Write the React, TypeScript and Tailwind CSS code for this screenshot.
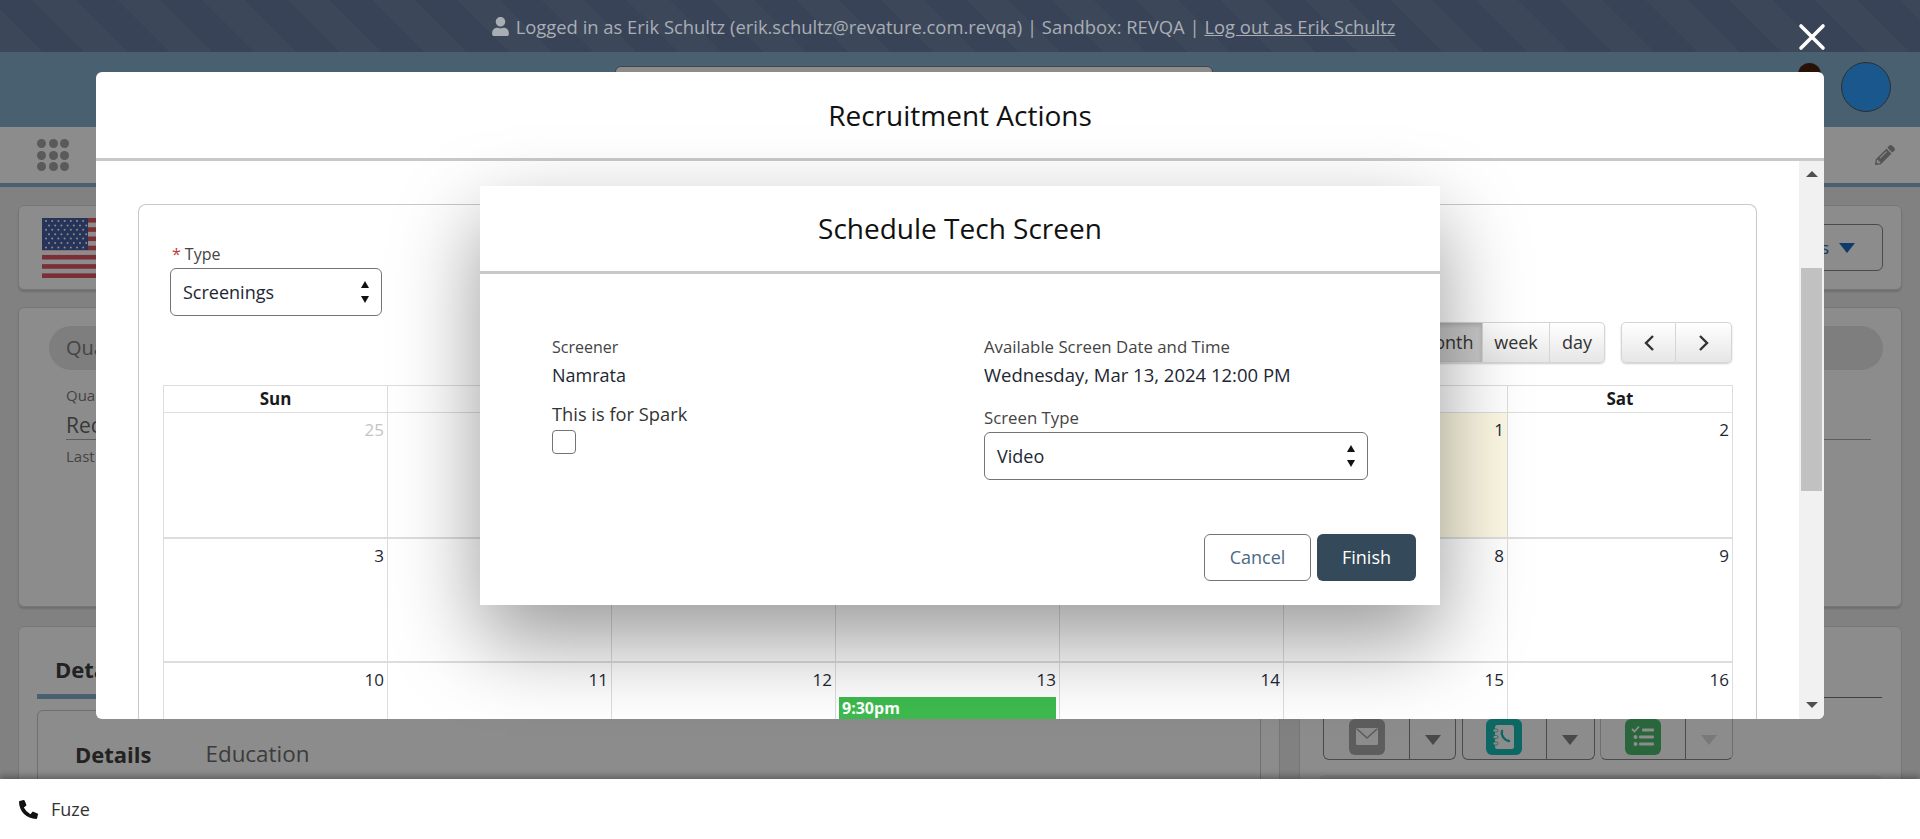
import React from "react";
import { FaPencilAlt, FaPhoneAlt, FaUser } from "react-icons/fa";

const font = "font-['Open_Sans','Noto_Sans',sans-serif]";

function Arrows() {
  return (
    <svg width="10" height="24" viewBox="0 0 10 24" className="shrink-0">
      <path d="M5 1l4 7H1z" fill="#111" />
      <path d="M5 23l4-7H1z" fill="#111" />
    </svg>
  );
}

function Flag() {
  const stripes = [0, 1, 2, 3, 4, 5, 6];
  const stars: React.ReactNode[] = [];
  for (let r = 0; r < 7; r++) {
    for (let c = 0; c < 7; c++) {
      stars.push(<circle key={`${r}-${c}`} cx={4 + c * 6.2 + (r % 2 ? 3 : 0)} cy={3 + r * 4.4} r="1" fill="#ffffff" />);
    }
  }
  return (
    <svg width="84" height="60" viewBox="0 0 84 60" className="shrink-0">
      <rect width="84" height="60" fill="#ffffff" />
      {stripes.map((i) => (
        <rect key={i} y={i * 9.23} width="84" height="4.6" fill="#dd5762" />
      ))}
      <rect width="46" height="32" fill="#475fa3" />
      {stars}
    </svg>
  );
}

function ActionIcon({ bg, kind }: { bg: string; kind: "mail" | "book" | "list" }) {
  return (
    <svg width="36" height="36" viewBox="0 0 36 36" className="shrink-0">
      <rect width="36" height="36" rx="6" fill={bg} />
      {kind === "mail" && (
        <g>
          <rect x="7" y="9" width="22" height="17" rx="1.5" fill="#ffffff" />
          <path d="M8 10l10 9 10-9" fill="none" stroke={bg} strokeWidth="1.6" />
        </g>
      )}
      {kind === "book" && (
        <g>
          <rect x="9" y="6" width="19" height="24" rx="2.5" fill="#ffffff" />
          <rect x="7" y="10" width="5" height="3" rx="1.5" fill="#ffffff" stroke={bg} strokeWidth="0.8" />
          <rect x="7" y="16.5" width="5" height="3" rx="1.5" fill="#ffffff" stroke={bg} strokeWidth="0.8" />
          <rect x="7" y="23" width="5" height="3" rx="1.5" fill="#ffffff" stroke={bg} strokeWidth="0.8" />
          <path d="M16 12c-1 3 1 9 7 10" fill="none" stroke={bg} strokeWidth="2.4" strokeLinecap="round" />
        </g>
      )}
      {kind === "list" && (
        <g fill="#ffffff">
          <path d="M7 10l2.5 2.5L14 7.5" fill="none" stroke="#ffffff" strokeWidth="1.8" />
          <rect x="17" y="9.5" width="12" height="3" rx="1" />
          <circle cx="10.5" cy="18" r="2" />
          <rect x="14" y="16.5" width="15" height="3" rx="1" />
          <circle cx="10.5" cy="25" r="2" />
          <rect x="14" y="23.5" width="15" height="3" rx="1" />
        </g>
      )}
    </svg>
  );
}

function ActionGroup({ bg, kind, dim, split }: { bg: string; kind: "mail" | "book" | "list"; dim?: boolean; split: string }) {
  return (
    <div className={`flex h-[46px] w-[133px] rounded-b-[6px] border border-t-0 ${dim ? "border-[#c8c8c8] border-b-[#888888]" : "border-[#888888]"}`}>
      <div className={`flex items-end justify-center pb-[4px] ${split} border-r border-r-[#888888]`}>
        <ActionIcon bg={bg} kind={kind} />
      </div>
      <div className="flex flex-1 items-center justify-center pt-[6px]">
        <svg width="16" height="10" viewBox="0 0 16 10">
          <path d="M0 0h16L8 10z" fill={dim ? "#dcdcdc" : "#868686"} />
        </svg>
      </div>
    </div>
  );
}

/* Cells behind the Schedule Tech Screen dialog stay empty: nothing of them shows. */
const rows = [
  ["25", "", "", "", "", "1", "2"],
  ["3", "", "", "", "", "8", "9"],
  ["10", "11", "12", "13", "14", "15", "16"],
];
const days = ["Sun", "", "", "", "", "", "Sat"];

function Calendar() {
  return (
    <div className="w-[1570px] border-l border-r border-t border-[#dddddd]">
      <div className="grid h-[27px] grid-cols-7 border-b border-[#dddddd]">
        {days.map((d, i) => (
          <div key={i} className={`text-center text-[17px] leading-[26px] font-bold text-[#1a1a1a] ${i < 6 ? "border-r border-[#dddddd]" : ""}`}>
            {d}
          </div>
        ))}
      </div>
      {rows.map((row, r) => (
        <div key={r} className={`grid grid-cols-7 ${r === 0 ? "h-[126px]" : "h-[124px]"} ${r < 2 ? "border-b-2 border-[#dddddd]" : ""}`}>
          {row.map((n, i) => (
            <div key={i} className={`pr-[3px] pt-[4px] text-right text-[17px] leading-[26px] ${i < 6 ? "border-r border-[#dddddd]" : ""} ${r === 0 && i === 5 ? "bg-[#fcf8e3]" : ""} ${n === "25" ? "text-[#c4c4c4]" : "text-[#1d2733]"}`}>
              {n}
              {n === "13" && (
                <div className="mt-[4px] ml-[3px] h-[28px] bg-[#3dbb4e] pl-[3px] text-left text-[16px] leading-[22px] font-bold text-white">9:30pm</div>
              )}
            </div>
          ))}
        </div>
      ))}
    </div>
  );
}

function Page() {
  return (
    <div className="relative h-[727px] overflow-hidden bg-[#ececec]">
      <div className="flex h-[75px] justify-center bg-[#85b0cc]">
        <div className="mr-[92px] mt-[14px] h-[20px] w-[598px] rounded-t-[6px] border border-[#7c7c7c] bg-white" />
        <div className="absolute left-[1798px] top-[11px] h-[24px] w-[23px] rounded-full bg-[#4a2110]" />
        <div className="absolute left-[1841px] top-[10px] h-[50px] w-[50px] rounded-full border border-[#555] bg-[#2f9fff]" />
      </div>
      <div className="flex h-[56px] items-center justify-between bg-white pl-[37px] pr-[25px]">
        <div className="grid grid-cols-3 gap-[2.5px]">
          {Array.from({ length: 9 }).map((_, i) => (
            <div key={i} className="h-[9px] w-[9px] rounded-full bg-[#a4a4a4]" />
          ))}
        </div>
        <FaPencilAlt className="text-[20px] text-[#9a9a9a]" />
      </div>
      <div className="h-[4px] bg-[#85b0cc]" />
      <div className="flex flex-col gap-[17px] px-[18px] pt-[18px]">
        <div className="flex h-[85px] items-center justify-between rounded-[6px] border border-[#d8d8d8] bg-white pl-[23px] pr-[18px] shadow-[0_2px_2px_rgba(0,0,0,0.15)]">
          <Flag />
          <div className="flex h-[47px] w-[130px] items-center justify-end gap-[10px] rounded-[6px] border border-[#888] pr-[27px] text-[17px] text-[#2a6a9e]">
            Actions
            <svg width="16" height="10" viewBox="0 0 16 10">
              <path d="M0 0h16L8 10z" fill="#1a6cc0" />
            </svg>
          </div>
        </div>
        <div className="h-[300px] rounded-[6px] border border-[#d8d8d8] bg-white pl-[30px] pr-[18px] pt-[18px] shadow-[0_2px_2px_rgba(0,0,0,0.15)]">
          <div className="flex h-[44px] items-center rounded-full bg-[#e5e5e5] px-[17px] text-[20px] text-[#7c7c7c]">Qualification</div>
          <div className="pl-[17px] pr-[12px]">
            <div className="mt-[14px] text-[15px] text-[#7c7c7c]">Qualification Status</div>
            <div className="mt-[5px] border-b border-[#aaa] pb-[1px] text-[21px] leading-[26px] text-[#666]">Recruit</div>
            <div className="mt-[5px] text-[15px] text-[#7c7c7c]">Last Modified</div>
          </div>
        </div>
        <div className="mt-[2px] flex gap-[19px]">
          <div className="h-[200px] w-[1262px] rounded-t-[6px] border border-[#d8d8d8] bg-white px-[18px] pt-[24px]">
            <div className="w-[110px] border-b-[5px] border-[#85b0cc] pb-[7px] pl-[18px] text-[22px] leading-[36px] font-bold text-[#3e3e3e]">Details</div>
            <div className="mt-[11px] h-[100px] rounded-t-[6px] border border-[#ccc] pl-[37px] pt-[25px]">
              <div className="flex gap-[54px] text-[22px] leading-[36px] text-[#6d6d6d]">
                <span className="font-bold text-[#3e3e3e]">Details</span>
                <span className="text-[22.4px]">Education</span>
              </div>
            </div>
          </div>
          <div className="h-[200px] flex-1 rounded-t-[6px] border border-[#d8d8d8] bg-white px-[19px] pt-[70px]">
            <div className="border-b border-[#777]" />
            <div className="mt-[16px] flex gap-[5.5px] pl-[4px]">
              <ActionGroup bg="#a9a9a9" kind="mail" split="w-[86px]" />
              <ActionGroup bg="#19bdb6" kind="book" split="w-[84px]" />
              <ActionGroup bg="#4cbb6c" kind="list" split="w-[85px]" dim />
            </div>
            <div className="mt-[15px] h-[20px] rounded-t-[6px] bg-[#eee]" />
          </div>
        </div>
      </div>
    </div>
  );
}

function Select({ value, className }: { value: string; className: string }) {
  return (
    <div className={`flex h-[48px] items-center justify-between rounded-[6px] border border-[#747474] bg-white pl-[12px] pr-[11px] text-[18px] text-[#1d2733] ${className}`}>
      <span className="pt-[1px]">{value}</span>
      <Arrows />
    </div>
  );
}

function ToolButton({ children, active, className }: { children: React.ReactNode; active?: boolean; className: string }) {
  return (
    <div className={`flex items-center justify-center border-[#d5d5d5] text-[18px] text-[#333] ${active ? "bg-[#c9c9c9] shadow-[inset_0_2px_4px_rgba(0,0,0,0.15)]" : "bg-gradient-to-b from-white to-[#e6e6e6]"} ${className}`}>
      {children}
    </div>
  );
}

function RecruitmentModal() {
  return (
    <div className="absolute left-[96px] top-[72px] flex h-[647px] w-[1728px] flex-col overflow-hidden rounded-[6px] bg-white">
      <div className="flex h-[89px] shrink-0 items-center justify-center border-b-[3px] border-[#c9c9c9] pb-[1px] text-[28px] text-[#111]">Recruitment Actions</div>
      <div className="flex min-h-0 flex-1">
        <div className="min-w-0 flex-1 overflow-hidden pl-[42px] pr-[42px] pt-[43px]">
          <div className="h-[800px] rounded-t-[8px] border border-b-0 border-[#c9c9c9] pl-[24px] pt-[38px]">
            <div className="pl-[9px] text-[16px] leading-[22px] text-[#444]">
              <span className="mr-[4px] text-[#c23934]">*</span>Type
            </div>
            <Select value="Screenings" className="ml-[7px] mt-[3px] w-[212px]" />
            <div className="mt-[6px] flex h-[41px] w-[1569px] justify-end gap-[16px]">
              <div className="flex rounded-[5px] shadow-[0_1px_2px_rgba(0,0,0,0.2)]">
                <ToolButton active className="w-[75px] rounded-l-[5px] border">month</ToolButton>
                <ToolButton className="w-[67px] border-y border-r">week</ToolButton>
                <ToolButton className="w-[55px] rounded-r-[5px] border-y border-r">day</ToolButton>
              </div>
              <div className="flex rounded-[5px] shadow-[0_1px_2px_rgba(0,0,0,0.2)]">
                <ToolButton className="w-[55px] rounded-l-[5px] border">
                  <svg width="12" height="18" viewBox="0 0 12 18"><path d="M10 2L3 9l7 7" fill="none" stroke="#333" strokeWidth="2.4" /></svg>
                </ToolButton>
                <ToolButton className="w-[56px] rounded-r-[5px] border-y border-r">
                  <svg width="12" height="18" viewBox="0 0 12 18"><path d="M2 2l7 7-7 7" fill="none" stroke="#333" strokeWidth="2.4" /></svg>
                </ToolButton>
              </div>
            </div>
            <div className="mt-[22px]">
              <Calendar />
            </div>
          </div>
        </div>
        <div className="flex w-[25px] shrink-0 flex-col items-center bg-[#f1f1f1] pt-[10px]">
          <svg width="12" height="6" viewBox="0 0 12 6"><path d="M6 0l6 6H0z" fill="#505050" /></svg>
          <div className="mt-[91px] h-[223px] w-[21px] bg-[#c1c1c1]" />
          <div className="flex-1" />
          <svg className="mb-[11px]" width="12" height="6" viewBox="0 0 12 6"><path d="M6 6l6-6H0z" fill="#505050" /></svg>
        </div>
      </div>
    </div>
  );
}

function ScheduleModal() {
  return (
    <div className="absolute left-[480px] top-[186px] flex h-[419px] w-[960px] flex-col bg-white shadow-[0_35px_80px_rgba(0,0,0,0.4)]">
      <div className="flex h-[88px] shrink-0 items-center justify-center border-b-[3px] border-[#c9c9c9] pb-[1px] text-[28px] text-[#111]">Schedule Tech Screen</div>
      <div className="grid grid-cols-[432px_1fr] pl-[72px] pr-[72px] pt-[61px]">
        <div>
          <div className="text-[16px] leading-[24px] text-[#444]">Screener</div>
          <div className="mt-[3px] text-[18px] leading-[26px] text-[#1d2733]">Namrata</div>
          <div className="mt-[13px] text-[18.3px] leading-[26px] text-[#333]">This is for Spark</div>
          <div className="mt-[3px] h-[24px] w-[24px] rounded-[4px] border border-[#747474]" />
        </div>
        <div>
          <div className="text-[16.8px] leading-[24px] text-[#444]">Available Screen Date and Time</div>
          <div className="mt-[3px] text-[18.5px] leading-[26px] text-[#1d2733]">Wednesday, Mar 13, 2024 12:00 PM</div>
          <div className="mt-[18px] text-[16.8px] leading-[24px] text-[#444]">Screen Type</div>
          <Select value="Video" className="mt-[2px] w-[384px]" />
        </div>
      </div>
      <div className="mt-[54px] flex justify-end gap-[6px] pr-[24px]">
        <div className="flex h-[47px] w-[107px] items-center justify-center rounded-[6px] border border-[#747474] text-[18px] text-[#4a6a85]">Cancel</div>
        <div className="flex h-[47px] w-[99px] items-center justify-center rounded-[6px] bg-[#344a5a] text-[18px] text-white">Finish</div>
      </div>
    </div>
  );
}

export default function App() {
  return (
    <div className={`relative flex h-[839px] w-full flex-col overflow-hidden bg-white ${font}`}>
      <div className="relative h-[779px]">
        <div className="pt-[52px]">
          <Page />
        </div>
        <div className="absolute inset-0 bg-black/45" />
        <div className="absolute inset-x-0 top-0 flex h-[52px] items-center justify-center gap-[6px] bg-[repeating-linear-gradient(45deg,#3c4859_0px,#3c4859_30px,#394358_30px,#394358_60px)] pr-[34px] pt-[1px] text-[18.4px] text-[#a9aeb5]">
          <FaUser className="text-[19px]" />
          <span>
            Logged in as Erik Schultz (erik.schultz@revature.com.revqa) | Sandbox: REVQA | <span className="underline">Log out as Erik Schultz</span>
          </span>
        </div>
        <RecruitmentModal />
        <ScheduleModal />
        <svg className="absolute left-[1798px] top-[23px]" width="28" height="28" viewBox="0 0 28 28">
          <path d="M3 3l22 22M25 3L3 25" stroke="#fff" strokeWidth="3.6" strokeLinecap="round" />
        </svg>
      </div>
      <div className="relative flex h-[60px] items-center gap-[13px] bg-white pl-[19px] pt-[1px] text-[18px] text-[#333] shadow-[0_-3px_6px_rgba(0,0,0,0.3)]">
        <FaPhoneAlt className="text-[19px] text-[#111]" />
        <span>Fuze</span>
      </div>
    </div>
  );
}
